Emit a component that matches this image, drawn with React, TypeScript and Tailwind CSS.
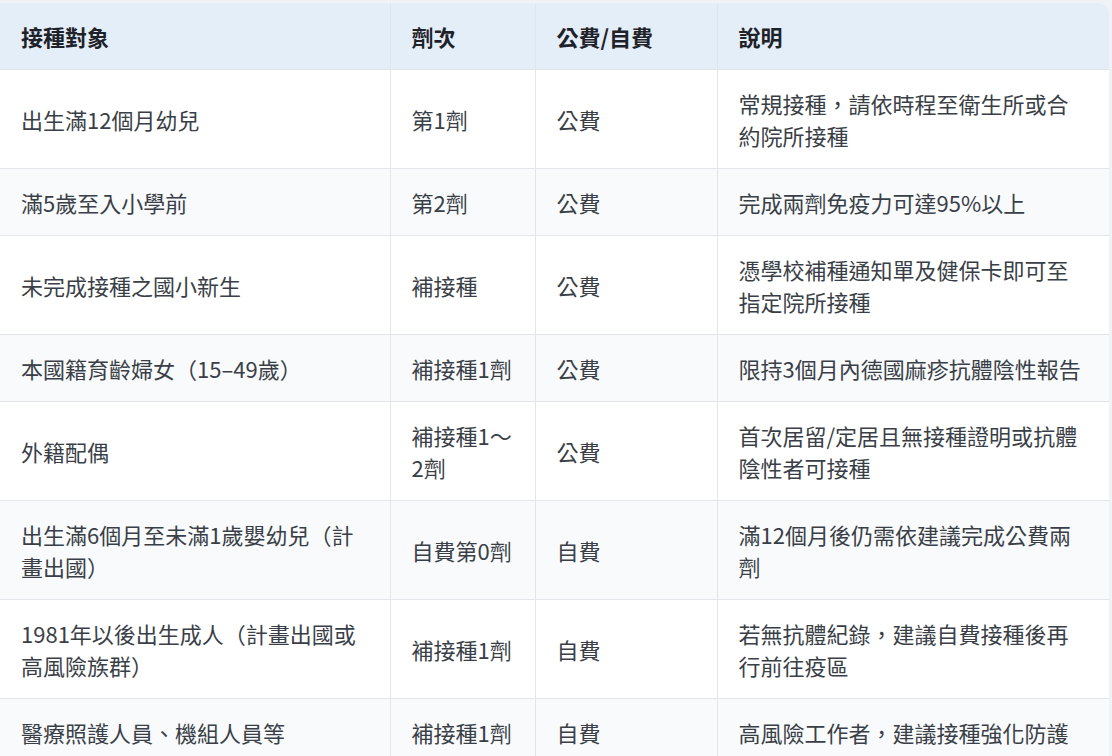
const rows: [string, string, string, string][] = [
  ["出生滿12個月幼兒", "第1劑", "公費", "常規接種，請依時程至衛生所或合約院所接種"],
  ["滿5歲至入小學前", "第2劑", "公費", "完成兩劑免疫力可達95%以上"],
  ["未完成接種之國小新生", "補接種", "公費", "憑學校補種通知單及健保卡即可至指定院所接種"],
  ["本國籍育齡婦女（15–49歲）", "補接種1劑", "公費", "限持3個月內德國麻疹抗體陰性報告"],
  ["外籍配偶", "補接種1～2劑", "公費", "首次居留/定居且無接種證明或抗體陰性者可接種"],
  ["出生滿6個月至未滿1歲嬰幼兒（計畫出國）", "自費第0劑", "自費", "滿12個月後仍需依建議完成公費兩劑"],
  ["1981年以後出生成人（計畫出國或高風險族群）", "補接種1劑", "自費", "若無抗體紀錄，建議自費接種後再行前往疫區"],
  ["醫療照護人員、機組人員等", "補接種1劑", "自費", "高風險工作者，建議接種強化防護"],
];

export default function App() {
  const cell = "px-[21px] py-[17px] align-middle border-b border-[#e2e5ea]";
  return (
    <div className="min-h-screen bg-[#f0f3f6] pt-[3px]" style={{ fontFamily: '"Noto Sans CJK TC", "Noto Sans", sans-serif' }}>
      <div className="w-[1109px] bg-white rounded-tr-[10px] overflow-hidden">
        <table className="w-full border-collapse text-[22px] leading-[32px] text-[#3a3f47] table-fixed">
          <colgroup>
            <col className="w-[390px]" />
            <col className="w-[145px]" />
            <col className="w-[182px]" />
            <col />
          </colgroup>
          <thead>
            <tr className="bg-[#e4eef9] text-[#1f2329] font-bold text-left">
              <th className={cell + " border-r"}>接種對象</th>
              <th className={cell + " border-r"}>劑次</th>
              <th className={cell + " border-r"}>公費/自費</th>
              <th className={cell}>說明</th>
            </tr>
          </thead>
          <tbody>
            {rows.map((r, i) => (
              <tr key={i} className={i % 2 === 1 ? "bg-[#f8fafc]" : "bg-white"}>
                <td className={cell + " border-r"}>{r[0]}</td>
                <td className={cell + " border-r"}>{r[1]}</td>
                <td className={cell + " border-r"}>{r[2]}</td>
                <td className={cell}>{r[3]}</td>
              </tr>
            ))}
          </tbody>
        </table>
      </div>
    </div>
  );
}
